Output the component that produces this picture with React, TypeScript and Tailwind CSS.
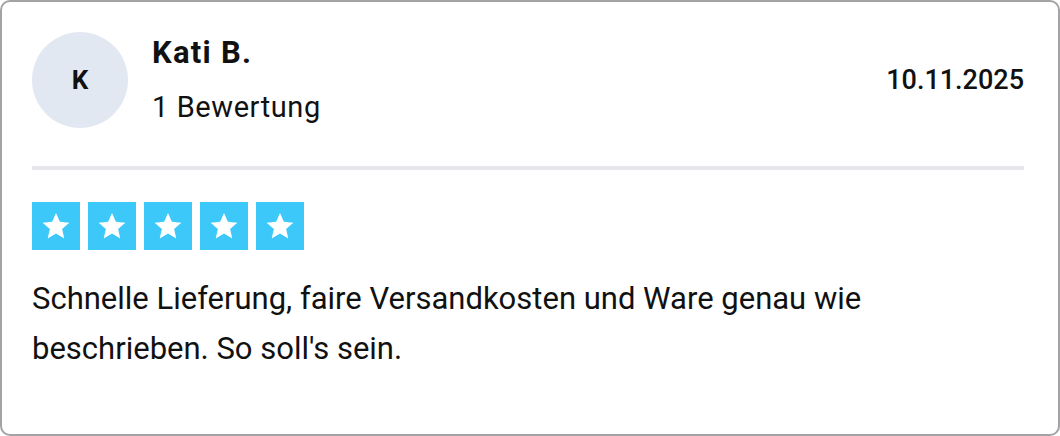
const review = {
  initial: "K",
  name: "Kati B.",
  count: "1 Bewertung",
  date: "10.11.2025",
  rating: 5,
  text: "Schnelle Lieferung, faire Versandkosten und Ware genau wie beschrieben. So soll's sein.",
};

function StarIcon() {
  return (
    <svg viewBox="0 0 24 24" className="h-8 w-8" fill="white">
      <polygon points="12,2.2 14.9,8.9 22,9.5 16.6,14.2 18.2,21.3 12,17.6 5.8,21.3 7.4,14.2 2,9.5 9.1,8.9" />
    </svg>
  );
}

export default function App() {
  return (
    <div
      className="h-[436px] w-[1060px] bg-white text-[#111]"
      style={{ fontFamily: "Roboto, 'Liberation Sans', sans-serif" }}
    >
      <div className="h-full rounded-[10px] border-2 border-[#a3a3a6] pl-[30px] pr-[34px] pt-[30px]">
        {/* cabecera */}
        <div className="flex items-center justify-between">
          <div className="flex items-center gap-6">
            <div className="flex h-24 w-24 items-center justify-center rounded-full bg-[#e2e8f1] text-[26px] font-bold">
              {review.initial}
            </div>
            <div className="flex flex-col">
              <span className="text-[31px] font-bold leading-[36px] tracking-[0.04em]">
                {review.name}
              </span>
              <span className="mt-[18px] text-[29px] leading-[36px] tracking-[0.02em]">
                {review.count}
              </span>
            </div>
          </div>
          <span className="text-[27px] font-medium">{review.date}</span>
        </div>

        <div className="mt-[38px] h-1 bg-[#e5e7eb]" />

        <div className="mt-8 flex gap-2">
          {Array.from({ length: review.rating }).map((_, i) => (
            <div
              key={i}
              className="flex h-12 w-12 items-center justify-center bg-[#3cc9f9]"
            >
              <StarIcon />
            </div>
          ))}
        </div>

        <p className="mt-6 max-w-[900px] text-[31px] leading-[50px]">
          {review.text}
        </p>
      </div>
    </div>
  );
}
